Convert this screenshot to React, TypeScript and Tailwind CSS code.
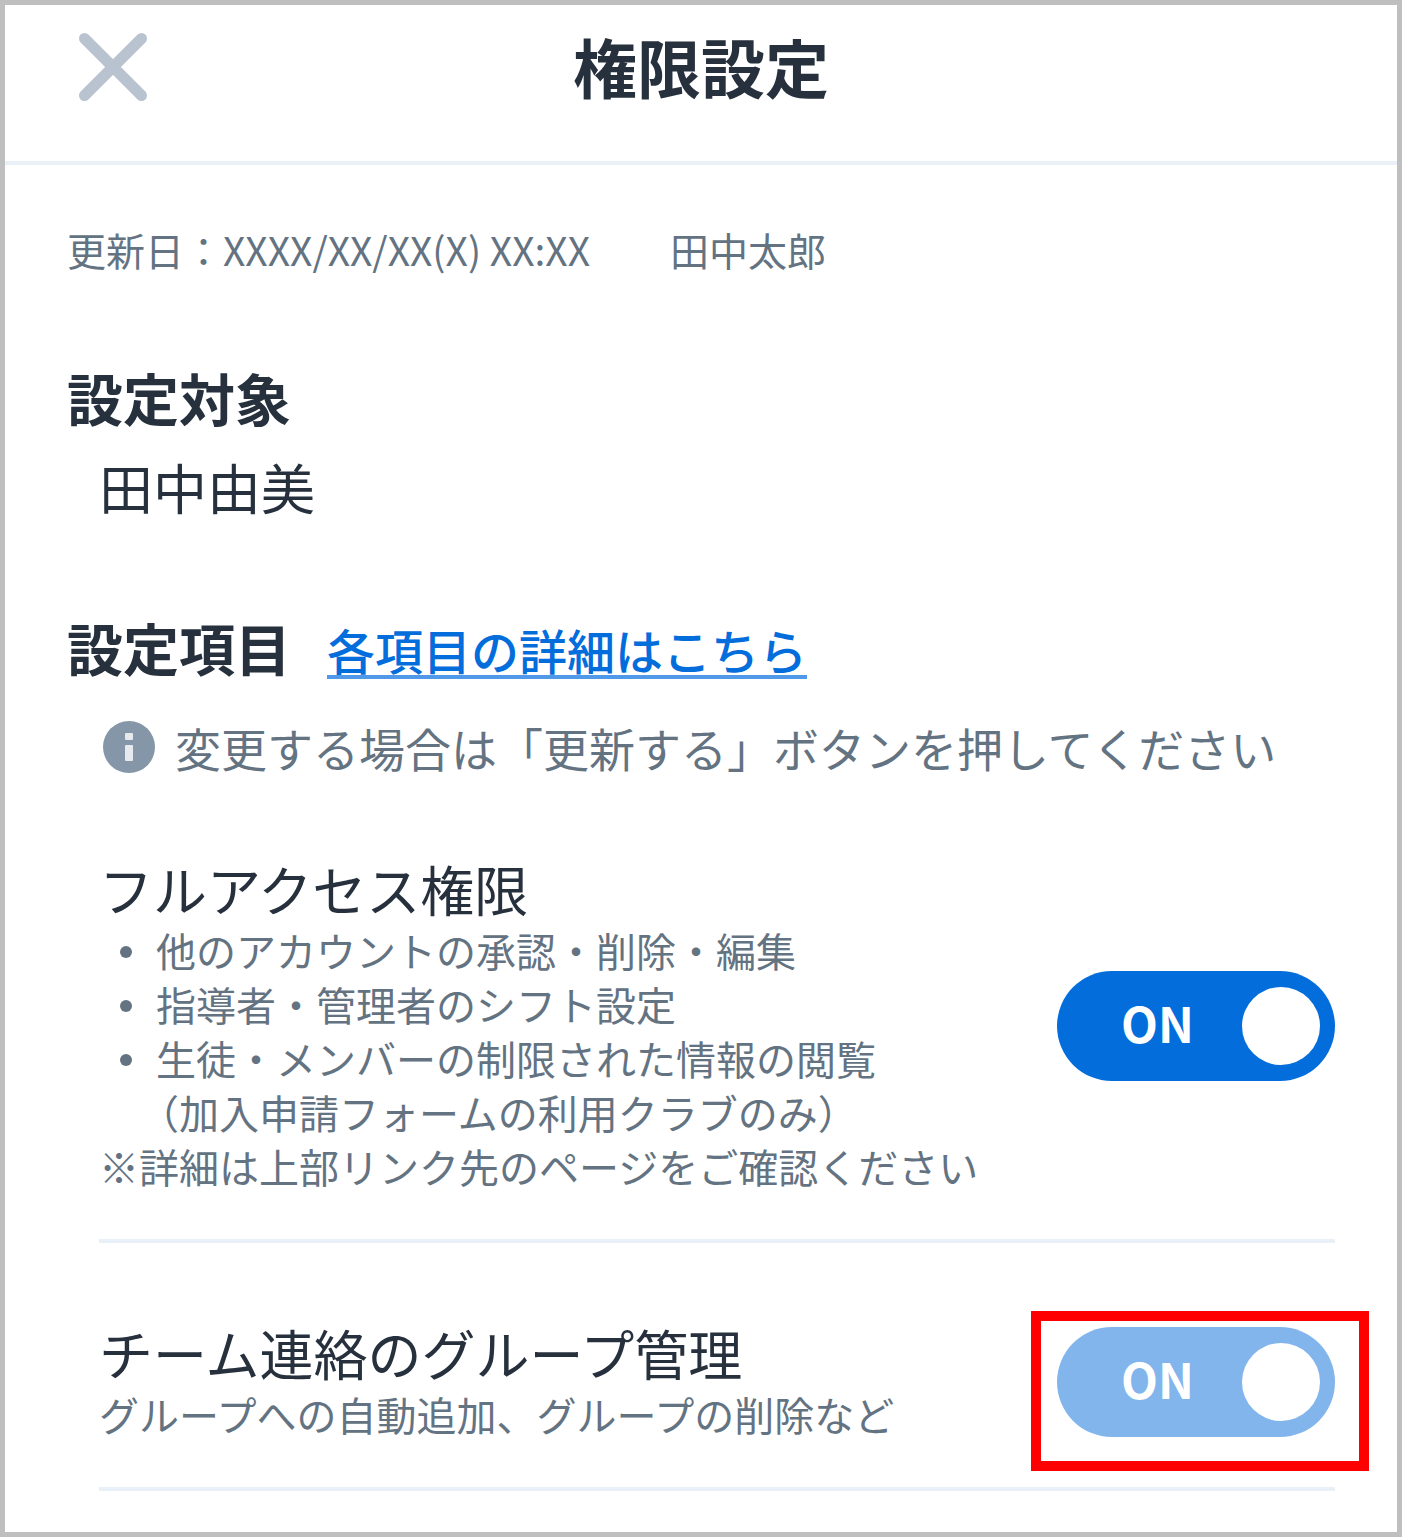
import React, { useState } from "react";

type ToggleProps = {
  id: string;
  label: string;
  checked: boolean;
  disabled?: boolean;
  onChange?: (checked: boolean) => void;
};

const Toggle = ({ id, label, checked, disabled, onChange }: ToggleProps) => {
  return (
    <label
      htmlFor={id}
      className="relative flex h-[110px] w-[278px] cursor-pointer items-center justify-between rounded-full bg-[#8596a8] pr-[15px] pl-16 has-checked:bg-[#046ddc] has-disabled:cursor-not-allowed has-disabled:bg-[#82b5ec]"
    >
      <input
        id={id}
        type="checkbox"
        role="switch"
        aria-label={label}
        checked={checked}
        disabled={disabled}
        onChange={(e) => onChange?.(e.target.checked)}
        className="sr-only"
      />
      <span className="pb-2 text-[48px] leading-[54px] font-bold text-white">
        {checked ? "ON" : "OFF"}
      </span>
      <span className="size-[78px] rounded-full bg-white" />
    </label>
  );
};

const InfoIcon = () => (
  <svg viewBox="0 0 52 52" className="size-[52px] shrink-0" aria-hidden="true">
    <circle cx="26" cy="26" r="26" fill="#8596a8" />
    <rect x="22" y="12" width="8" height="7" rx="1" fill="#e6eaee" />
    <rect x="22" y="24" width="8" height="16" rx="1" fill="#e6eaee" />
  </svg>
);

const fullAccessItems = [
  "他のアカウントの承認・削除・編集",
  "指導者・管理者のシフト設定",
  "生徒・メンバーの制限された情報の閲覧",
];

const App = () => {
  const [fullAccess, setFullAccess] = useState(true);

  return (
    <div
      lang="ja"
      className="min-h-screen border-[5px] border-[#bfbfbf] bg-white font-['Noto_Sans_CJK_JP',sans-serif] text-[#27313d]"
    >
      {/* Header */}
      <header className="grid grid-cols-[1fr_auto_1fr] items-start border-b-4 border-[#e9f0f8] px-[74px] pt-7 pb-[60px]">
        <button type="button" aria-label="閉じる" className="size-[68px] cursor-pointer">
          <svg
            viewBox="0 0 68 68"
            className="size-full"
            fill="none"
            stroke="#b8c3cf"
            strokeWidth="11"
            strokeLinecap="round"
          >
            <path d="M5.500 5.500 62.500 62.500M62.500 5.500 5.500 62.500" />
          </svg>
        </button>
        <h1 className="text-[64px] leading-[64px] font-bold">権限設定</h1>
      </header>

      <main className="px-[62px] pt-14">
        <p className="flex flex-wrap gap-x-20 text-[39px] leading-[56px] text-[#647382]">
          <span>更新日：XXXX/XX/XX(X) XX:XX</span>
          <span>田中太郎</span>
        </p>

        {/* Target member */}
        <section className="mt-20">
          <h2 className="text-[56px] leading-[80px] font-bold">設定対象</h2>
          <p className="mt-2.5 pl-8 text-[54px] leading-[80px]">田中由美</p>
        </section>

        {/* Permission items */}
        <section className="mt-20">
          <div className="flex flex-wrap items-center gap-x-9">
            <h2 className="text-[56px] leading-[80px] font-bold">設定項目</h2>
            <a
              href="#details"
              className="mt-2 border-b-4 border-[#5099e8] text-[48px] leading-[52px] font-medium text-[#046ddc]"
            >
              各項目の詳細はこちら
            </a>
          </div>

          <div className="pl-8">
            <p className="mt-7 flex items-center gap-5 pl-1 text-[46px] leading-[64px] text-[#647382]">
              <InfoIcon />
              変更する場合は「更新する」ボタンを押してください
            </p>

            <div className="mt-20 flex items-center justify-between border-b-4 border-[#e9f0f8] pb-[46px]">
              <div className="text-[40px] leading-[54px] text-[#647382]">
                <h3 className="mb-1 text-[54px] leading-[60px] text-[#27313d]">
                  フルアクセス権限
                </h3>
                <ul>
                  {fullAccessItems.map((item) => (
                    <li key={item} className="flex items-center gap-6 pl-[21px]">
                      <span className="mt-1 size-3 rounded-full bg-[#647382]" />
                      {item}
                    </li>
                  ))}
                </ul>
                <p className="pl-[60px] [text-spacing-trim:trim-start]">
                  （加入申請フォームの利用クラブのみ）
                </p>
                <p>※詳細は上部リンク先のページをご確認ください</p>
              </div>
              <div className="shrink-0">
                <Toggle
                  id="full-access"
                  label="フルアクセス権限"
                  checked={fullAccess}
                  onChange={setFullAccess}
                />
              </div>
            </div>

            <div className="flex items-center justify-between border-b-4 border-[#e9f0f8] pt-20 pb-[46px]">
              <div className="text-[40px] leading-[54px] text-[#647382]">
                <h3 className="mb-1 text-[54px] leading-[60px] text-[#27313d]">
                  チーム連絡のグループ管理
                </h3>
                <p>グループへの自動追加、グループの削除など</p>
              </div>
              <div className="relative shrink-0">
                <Toggle id="group-admin" label="チーム連絡のグループ管理" checked disabled />
                {/* Highlight frame */}
                <div className="pointer-events-none absolute -top-4 -right-[34px] -bottom-[34px] -left-[26px] border-10 border-[#ff0000]" />
              </div>
            </div>
          </div>
        </section>
      </main>
    </div>
  );
};

export default App;
